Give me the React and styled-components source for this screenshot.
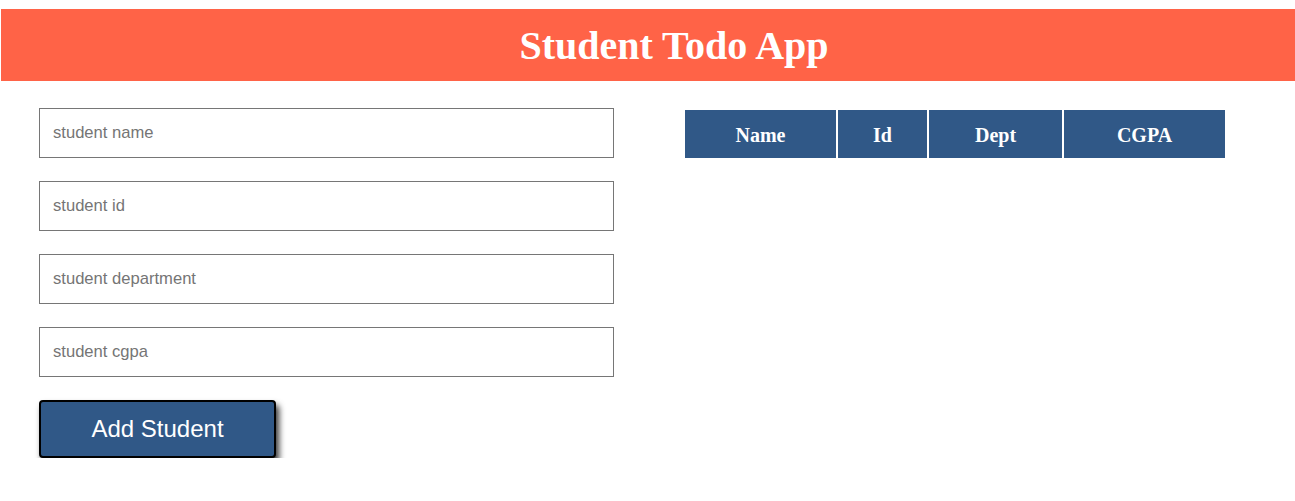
import React from "react";
import styled, { createGlobalStyle } from "styled-components";

const Global = createGlobalStyle`
  html, body { margin: 0; padding: 0; background: #ffffff; }
  body { font-family: "Liberation Serif", "Times New Roman", serif; }
`;

const Page = styled.div`
  width: 1295px;
  padding-top: 9px;
`;

const Header = styled.header`
  margin-left: 1px;
  height: 72px;
  background: #ff6347;
  display: flex;
  align-items: center;
  justify-content: center;
`;

const Title = styled.h1`
  margin: 0;
  padding: 2px 0 0 52px;
  color: #ffffff;
  font-family: "Liberation Serif", "Times New Roman", serif;
  font-weight: bold;
  font-size: 40px;
  line-height: 1;
`;

const Main = styled.main`
  display: flex;
  align-items: flex-start;
  padding: 27px 0 0 39px;
  gap: 71px;
`;

const Form = styled.form`
  width: 575px;
  display: flex;
  flex-direction: column;
  gap: 23px;
`;

const Input = styled.input`
  box-sizing: border-box;
  width: 575px;
  height: 50px;
  border: 1px solid #767676;
  border-radius: 0;
  padding: 0 13px;
  font-family: "Liberation Sans", Arial, sans-serif;
  font-size: 16.6px;
  color: #222;
  outline: none;
  &::placeholder { color: #757575; }
`;

const Button = styled.button`
  box-sizing: border-box;
  width: 237px;
  height: 58px;
  background: #305887;
  color: #ffffff;
  border: 2px solid #000000;
  border-radius: 4px;
  box-shadow: 3px 5px 6px rgba(0, 0, 0, 0.8);
  font-family: "Liberation Sans", Arial, sans-serif;
  font-size: 24px;
  cursor: pointer;
`;

const Table = styled.table`
  margin-top: 2px;
  border-collapse: separate;
  border-spacing: 2px 0;
  margin-left: -2px;
`;

const Th = styled.th`
  box-sizing: border-box;
  width: ${(p) => p.$w}px;
  height: 48px;
  padding: 2px 0 0;
  background: #305887;
  color: #ffffff;
  font-family: "Liberation Serif", "Times New Roman", serif;
  font-weight: bold;
  font-size: 20px;
  text-align: center;
`;

const columns = [
  { label: "Name", w: 151 },
  { label: "Id", w: 89 },
  { label: "Dept", w: 133 },
  { label: "CGPA", w: 161 },
];

export default function App() {
  return (
    <Page>
      <Global />
      <Header>
        <Title>Student Todo App</Title>
      </Header>
      <Main>
        <Form onSubmit={(e) => e.preventDefault()}>
          <Input placeholder="student name" />
          <Input placeholder="student id" />
          <Input placeholder="student department" />
          <Input placeholder="student cgpa" />
          <Button type="submit">Add Student</Button>
        </Form>
        <Table>
          <thead>
            <tr>
              {columns.map((c) => (
                <Th key={c.label} $w={c.w}>
                  {c.label}
                </Th>
              ))}
            </tr>
          </thead>
        </Table>
      </Main>
    </Page>
  );
}
